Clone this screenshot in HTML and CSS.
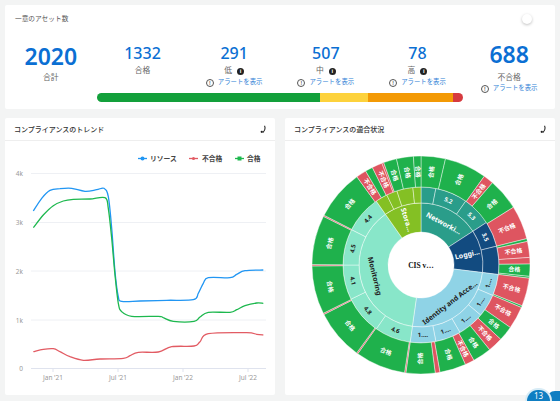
FILE: index.html
```html
<!DOCTYPE html>
<html lang="ja">
<head>
    <meta charset="UTF-8">
    <title>コンプライアンス</title>
    <link rel="stylesheet" href="styles.css">
</head>
<body>
    <section class="summary">
        <div class="summary-head">
            <span class="summary-title">一意のアセット数</span>
            <span class="toggle"></span>
        </div>
        <div class="stats">
            <div class="stat stat-big">
                <div class="num">2020</div>
                <div class="lbl">合計</div>
            </div>
            <div class="stat">
                <div class="num">1332</div>
                <div class="lbl">合格</div>
            </div>
            <div class="stat">
                <div class="num">291</div>
                <div class="lbl">低 <i class="info">i</i></div>
                <div class="alert"><i class="warn">!</i>アラートを表示</div>
            </div>
            <div class="stat">
                <div class="num">507</div>
                <div class="lbl">中 <i class="info">i</i></div>
                <div class="alert"><i class="warn">!</i>アラートを表示</div>
            </div>
            <div class="stat">
                <div class="num">78</div>
                <div class="lbl">高 <i class="info">i</i></div>
                <div class="alert"><i class="warn">!</i>アラートを表示</div>
            </div>
            <div class="stat stat-big stat-last">
                <div class="num">688</div>
                <div class="lbl">不合格</div>
                <div class="alert"><i class="warn">!</i>アラートを表示</div>
            </div>
            <div class="bar">
                <span class="seg seg-green"></span>
                <span class="seg seg-yellow"></span>
                <span class="seg seg-orange"></span>
                <span class="seg seg-red"></span>
            </div>
        </div>
    </section>

    <div class="cards">
        <section class="card">
            <div class="card-head">
                <h2>コンプライアンスのトレンド</h2>
                <svg class="mark" viewBox="0 0 8 10"><path d="M5.2 .8C6.2 3 6 5.800 3.200 8.600" /><circle cx="2" cy="7.600" r="1.300" /></svg>
            </div>
            <svg id="trend" class="chart" viewBox="5 141 270 254">
                <g class="grid">
                    <line x1="31" x2="266" y1="173.500" y2="173.500" />
                    <line x1="31" x2="266" y1="222.500" y2="222.500" />
                    <line x1="31" x2="266" y1="271" y2="271" />
                    <line x1="31" x2="266" y1="320" y2="320" />
                    <line class="axis" x1="31" x2="266" y1="368.500" y2="368.500" />
                    <line class="axis" x1="53" x2="53" y1="368" y2="372" />
                    <line class="axis" x1="118" x2="118" y1="368" y2="372" />
                    <line class="axis" x1="183" x2="183" y1="368" y2="372" />
                    <line class="axis" x1="248" x2="248" y1="368" y2="372" />
                </g>
                <g class="ticks">
                    <text x="23" y="176" text-anchor="end">4k</text>
                    <text x="23" y="225" text-anchor="end">3k</text>
                    <text x="23" y="274" text-anchor="end">2k</text>
                    <text x="23" y="323" text-anchor="end">1k</text>
                    <text x="23" y="371" text-anchor="end">0</text>
                    <text x="53" y="380" text-anchor="middle">Jan '21</text>
                    <text x="118" y="380" text-anchor="middle">Jul '21</text>
                    <text x="183" y="380" text-anchor="middle">Jan '22</text>
                    <text x="248" y="380" text-anchor="middle">Jul '22</text>
                </g>
                <g class="legend">
                    <line class="blue" x1="138" x2="147" y1="158.500" y2="158.500" />
                    <circle cx="142.500" cy="158.500" r="2" fill="#2196f3" />
                    <text x="150" y="161">リソース</text>
                    <line class="red" x1="189" x2="198" y1="158.500" y2="158.500" />
                    <circle cx="193.500" cy="158.500" r="1.500" fill="#e25b63" />
                    <text x="202" y="161">不合格</text>
                    <line class="green" x1="235" x2="244" y1="158.500" y2="158.500" />
                    <rect x="237.500" y="156.500" width="4" height="4" fill="#1db84e" />
                    <text x="247" y="161">合格</text>
                </g>
            </svg>
        </section>
        <section class="card">
            <div class="card-head">
                <h2>コンプライアンスの適合状況</h2>
                <svg class="mark" viewBox="0 0 8 10"><path d="M5.2 .8C6.2 3 6 5.800 3.200 8.600" /><circle cx="2" cy="7.600" r="1.300" /></svg>
            </div>
            <svg id="sunburst" class="chart" viewBox="285 141 270 254"></svg>
        </section>
    </div>

    <div class="badge">13</div>
    <div class="badge-dot"></div>

    <script src="charts.js"></script>
</body>
</html>
```

FILE: styles.css
```css
html, body {
    height: 100%;
}
body {
    font-family: "Noto Sans", "Noto Sans CJK JP", sans-serif;
    background-color: #f3f4f4;
    margin: 0;
    padding: 5px;
    box-sizing: border-box;
    overflow: hidden;
    position: relative;
}
.summary {
    width: 550px;
    height: 104px;
    background-color: #ffffff;
    border-radius: 2px;
    box-sizing: border-box;
}
.summary-head {
    display: flex;
    justify-content: space-between;
    align-items: center;
    padding: 9px 23px 0 10px;
}
.summary-title {
    font-size: 6.700px;
    line-height: 10px;
    color: #555555;
}
.toggle {
    width: 10px;
    height: 10px;
    border-radius: 50%;
    background-color: #ffffff;
    box-shadow: 0 1px 3px rgba(0, 0, 0, 0.25);
}
.stats {
    display: grid;
    grid-template-columns: repeat(6, 1fr);
    grid-template-rows: 53px 9px;
    padding-top: 16px;
}
.stat {
    text-align: center;
    padding-top: 3px;
}
.stat-big {
    padding-top: 3px;
}
.stat-big .lbl {
    margin-top: 1px;
}
.stat-last {
    padding-top: 1px;
}
.stat-last .lbl {
    margin-top: 3px;
}
.stat-last .alert {
    margin-top: -1px;
}
.num {
    font-size: 16px;
    line-height: 20px;
    font-weight: 500;
    color: #0b6fd3;
}
.stat-big .num {
    font-size: 23px;
    line-height: 27px;
    font-weight: 600;
}
.lbl {
    font-size: 7.800px;
    line-height: 12px;
    color: #666666;
    margin-top: 1px;
}
.info {
    display: inline-block;
    width: 7px;
    height: 7px;
    border-radius: 50%;
    margin-left: 3px;
    background-color: #222222;
    color: #ffffff;
    font: bold 6px/7px "Liberation Sans", sans-serif;
    vertical-align: 0;
}
.alert {
    font-size: 6.400px;
    line-height: 11px;
    color: #2f7fd6;
    white-space: nowrap;
}
.warn {
    display: inline-block;
    width: 6px;
    height: 6px;
    border: 1px solid #555555;
    border-radius: 50%;
    margin-right: 4px;
    color: #555555;
    font: bold 5px/6px "Liberation Sans", sans-serif;
    vertical-align: -1px;
}
.bar {
    grid-column: 2 / 6;
    display: flex;
    height: 9px;
    border-radius: 5px;
    overflow: hidden;
}
.seg {
    display: block;
}
.seg-green {
    width: 223px;
    background-color: #13a03b;
}
.seg-yellow {
    width: 48px;
    background-color: #fdd23c;
}
.seg-orange {
    width: 85px;
    background-color: #f39a05;
}
.seg-red {
    flex: 1;
    background-color: #d63a3f;
}
.cards {
    display: flex;
    gap: 10px;
    margin-top: 9px;
}
.card {
    width: 270px;
    height: 277px;
    background-color: #ffffff;
    border-radius: 2px;
}
.card-head {
    height: 22px;
    display: flex;
    justify-content: space-between;
    align-items: center;
    padding: 0 8px 0 9px;
    border-bottom: 1px solid #eeeeee;
}
.card-head h2 {
    margin: 0;
    font-size: 7px;
    font-weight: 500;
    color: #333333;
}
.mark {
    width: 7px;
    height: 9px;
}
.mark path {
    fill: none;
    stroke: #222222;
    stroke-width: 1.200;
}
.mark circle {
    fill: #222222;
}
.chart {
    display: block;
    width: 270px;
    height: 254px;
}
.grid line {
    stroke: #eef0f4;
    stroke-width: 1;
}
.grid .axis {
    stroke: #dfe3ee;
}
.ticks text {
    font-size: 6.500px;
    fill: #999999;
}
.legend text {
    font-size: 6.800px;
    font-weight: 700;
    fill: #444444;
}
.legend line {
    stroke-width: 1.300;
}
.line {
    fill: none;
    stroke-width: 1.300;
    stroke-linejoin: round;
}
.blue {
    stroke: #2196f3;
}
.red {
    stroke: #e25b63;
}
.green {
    stroke: #1db84e;
}
.cell {
    stroke: #ffffff;
    stroke-opacity: 0.6;
    stroke-width: 0.700;
}
.cell-text {
    font-size: 6px;
    font-weight: 700;
    text-anchor: middle;
    dominant-baseline: central;
}
.cell-text.big {
    font-size: 7px;
}
.center-text {
    font-family: "Liberation Serif", serif;
    font-size: 7.500px;
    font-weight: 700;
    text-anchor: middle;
    dominant-baseline: central;
    fill: #111111;
}
.badge-dot {
    position: absolute;
    left: 547px;
    top: 391px;
    width: 13px;
    height: 10px;
    border-radius: 8px 0 0 0;
    background-color: #0f7ec2;
}
.badge {
    position: absolute;
    z-index: 1;
    left: 527px;
    top: 390px;
    width: 23px;
    height: 11px;
    border-radius: 12px 12px 0 0;
    background-color: #0f7ec2;
    box-shadow: 0 0 0 2px #d8ecf6;
    color: #ffffff;
    font-size: 8px;
    line-height: 11px;
    text-align: center;
}
```

FILE: charts.js
```js
// trend lines, points read off in 3x crop coordinates
const series = {
    blue: [[100,288],[125,250],[150,226],[180,221],[215,220],[255,229],[290,224],[312,220],[325,245],[335,340],[345,470],[355,545],[365,559],[420,558],[500,556],[580,554],[595,535],[610,505],[625,488],[690,488],[710,478],[735,467],[790,465]],
    green: [[100,338],[130,300],[160,272],[190,258],[220,253],[270,252],[315,248],[325,280],[335,370],[345,480],[355,565],[365,590],[395,604],[475,604],[490,608],[520,619],[582,619],[600,606],[625,592],[690,592],[710,584],[735,572],[770,564],[790,565]],
    red: [[100,710],[130,703],[160,701],[180,710],[210,725],[250,736],[300,732],[370,730],[390,722],[415,712],[475,711],[515,695],[582,693],[600,680],[625,656],[740,653],[770,658],[790,660]]
};

const NS = 'http://www.w3.org/2000/svg';

function add(parent, tag, attrs, text) {
    const el = document.createElementNS(NS, tag);
    for (const k in attrs) el.setAttribute(k, attrs[k]);
    if (text) el.textContent = text;
    parent.appendChild(el);
    return el;
}

function smooth(pts) {
    let d = 'M' + pts[0][0] + ' ' + pts[0][1];
    for (let i = 0; i < pts.length - 1; i++) {
        const p0 = pts[i - 1] || pts[i];
        const p1 = pts[i];
        const p2 = pts[i + 1];
        const p3 = pts[i + 2] || p2;
        const c1x = p1[0] + (p2[0] - p0[0]) / 6;
        const c1y = p1[1] + (p2[1] - p0[1]) / 6;
        const c2x = p2[0] - (p3[0] - p1[0]) / 6;
        const c2y = p2[1] - (p3[1] - p1[1]) / 6;
        d += 'C' + [c1x, c1y, c2x, c2y, p2[0], p2[1]].map(n => n.toFixed(1)).join(' ');
    }
    return d;
}

const trend = document.getElementById('trend');
for (const name in series) {
    const pts = series[name].map(p => [p[0] / 3, 115 + p[1] / 3]);
    add(trend, 'path', { class: 'line ' + name, d: smooth(pts) });
}

// sunburst
const CX = 421, CY = 265;
const GREEN = '#1fb14c', RED = '#de5560', TEAL = '#2a9d8a', MINT = '#88e6c9',
      SKY = '#8fd3e6', NAVY = '#124b80', LIME = '#84c024';
const OK = '合格', NG = '不合格';

// [from, to, colour, label, label mode, text colour]
// mode: r = radial, p = along the arc
const rings = [
    { r0: 33, r1: 62, big: true, cells: [
        [0, 57, TEAL, 'Networki…', 'p', '#fff'],
        [57, 97, NAVY, 'Loggi…', 'r', '#fff'],
        [97, 188, SKY, 'Identity and Acce…', 'p', '#222'],
        [188, 325, MINT, 'Monitoring', 'p', '#222'],
        [325, 360, LIME, 'Stora…', 'r', '#fff']
    ]},
    { r0: 62, r1: 78, cells: [
        [0, 11, TEAL], [11, 35, TEAL, '5.2', 'p', '#fff'], [35, 57, TEAL, '5.3', 'p', '#fff'],
        [57, 76, NAVY, '3.5', 'p', '#fff'], [76, 97, NAVY],
        [97, 113, SKY, '1.…', 'p', '#222'], [113, 130, SKY, '1.…', 'p', '#222'],
        [130, 150, SKY, '1.…', 'p', '#222'], [150, 169, SKY, '1.…', 'p', '#222'],
        [169, 188, SKY, '1.…', 'p', '#222'],
        [188, 215, MINT, '4.6', 'p', '#222'], [215, 244, MINT, '4.8', 'p', '#222'],
        [244, 270, MINT, '4.1', 'p', '#222'], [270, 297, MINT, '4.5', 'p', '#222'],
        [297, 325, MINT, '4.4', 'p', '#222'],
        [325, 334, LIME], [334, 342, LIME], [342, 354, LIME], [354, 360, LIME]
    ]},
    { r0: 78, r1: 109, cells: [
        [0, 13, GREEN, OK, 'r'], [13, 35.5, GREEN, OK, 'r'], [35.5, 41, RED, NG, 'r'],
        [41, 58, GREEN, OK, 'r'], [58, 76, RED, NG, 'r'], [76, 77.5, GREEN],
        [77.5, 86, RED, NG, 'r'], [86, 89.5, RED], [89.5, 96, GREEN, OK, 'r'], [96, 97, GREEN],
        [97, 112, RED, NG, 'r'], [112, 113, GREEN], [113, 125, RED, NG, 'r'],
        [125, 133, GREEN, OK, 'r'], [133, 141, RED, NG, 'r'], [141, 151, GREEN, OK, 'r'],
        [151, 156, RED, NG, 'r'], [156, 170, GREEN, OK, 'r'], [170, 172.5, RED],
        [172.5, 188, GREEN, OK, 'r'], [188, 188.7, RED],
        [188.7, 215.5, GREEN, OK, 'p'], [215.5, 216.2, RED],
        [216.2, 243, GREEN, OK, 'p'], [243, 243.7, RED],
        [243.7, 269.5, GREEN, OK, 'p'], [269.5, 270.2, RED],
        [270.2, 296.5, GREEN, OK, 'p'], [296.5, 297.2, RED],
        [297.2, 324, GREEN, OK, 'p'], [324, 329.5, RED, NG, 'r'], [329.5, 333.5, GREEN],
        [333.5, 339, RED, NG, 'r'], [339, 340, RED],
        [340, 347, GREEN, OK, 'r'], [347, 356, GREEN, OK, 'r'], [356, 360, GREEN, OK, 'r']
    ]}
];

function polar(r, deg) {
    const a = deg * Math.PI / 180;
    return [CX + r * Math.sin(a), CY - r * Math.cos(a)];
}

function sector(r0, r1, a0, a1) {
    const large = a1 - a0 > 180 ? 1 : 0;
    const p = polar(r1, a0), q = polar(r1, a1), s = polar(r0, a1), t = polar(r0, a0);
    return 'M' + p + 'A' + r1 + ' ' + r1 + ' 0 ' + large + ' 1 ' + q +
           'L' + s + 'A' + r0 + ' ' + r0 + ' 0 ' + large + ' 0 ' + t + 'Z';
}

const sun = document.getElementById('sunburst');
rings.forEach(ring => {
    ring.cells.forEach(c => {
        add(sun, 'path', { class: 'cell', fill: c[2], d: sector(ring.r0, ring.r1, c[0], c[1]) });
    });
});
rings.forEach(ring => {
    ring.cells.forEach(c => {
        if (!c[3]) return;
        const mid = (c[0] + c[1]) / 2;
        const pos = polar((ring.r0 + ring.r1) / 2, mid);
        let rot;
        if (c[4] === 'r') {
            rot = mid <= 180 ? mid - 90 : mid - 270;
        } else {
            rot = mid > 90 && mid < 270 ? mid - 180 : (mid >= 270 ? mid - 360 : mid);
        }
        add(sun, 'text', {
            class: 'cell-text' + (ring.big ? ' big' : ''),
            fill: c[5] || '#fff',
            transform: 'translate(' + pos + ') rotate(' + rot.toFixed(1) + ')'
        }, c[3]);
    });
});
add(sun, 'text', { class: 'center-text', x: CX, y: CY }, 'CIS v…');
```
